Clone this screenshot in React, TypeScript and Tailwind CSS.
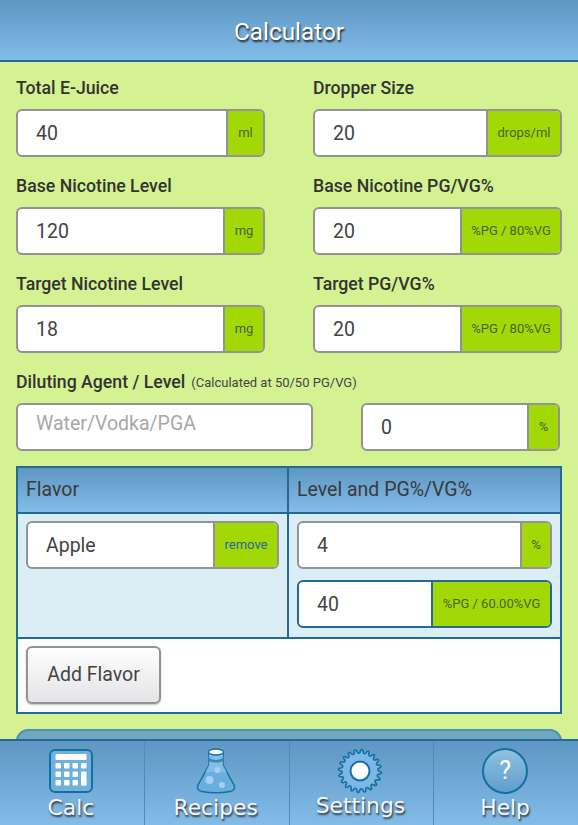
import type { ReactNode } from "react";

const font = "font-['Roboto','Liberation_Sans',sans-serif]";

function Field({
  value,
  unit,
  unitWidth,
  unitClass = "text-[#4a6420]",
  blue = false,
  className = "",
}: {
  value: string;
  unit: string;
  unitWidth: string;
  unitClass?: string;
  blue?: boolean;
  className?: string;
}) {
  const line = blue ? "border-[#22699c]" : "border-[#939393]";
  return (
    <div className={`flex h-[48px] overflow-hidden rounded-[6px] border-2 bg-white ${line} ${className}`}>
      <div className="flex min-w-0 flex-1 items-center pt-[1px] pl-[18px] text-[19.5px] text-[#444]">{value}</div>
      <div
        className={`flex shrink-0 items-center justify-center border-l-2 bg-[#a2d806] text-[13px] ${line} ${unitWidth} ${unitClass}`}
      >
        {unit}
      </div>
    </div>
  );
}

function Label({ children }: { children: ReactNode }) {
  return <div className="h-[30px] text-[17.7px] leading-[18px] font-medium text-[#333]">{children}</div>;
}

function CalcIcon() {
  const keys = [0, 1, 2, 3, 4, 5, 6, 7, 8, 9, 10];
  return (
    <svg width="44" height="44" viewBox="0 0 44 44">
      <rect x="1" y="1" width="42" height="42" rx="5" fill="#6fb0dc" stroke="#13719f" strokeWidth="2" />
      <rect x="6.500" y="5" width="31" height="6" rx="1" fill="#fff" />
      {keys.map((k) => {
        const col = k < 4 ? k : k < 7 ? k - 4 : k - 7;
        const row = k < 4 ? 0 : k < 7 ? 1 : 2;
        return <rect key={k} x={6.500 + col * 8.500} y={14 + row * 8.500} width="5.500" height="5.500" rx="1" fill="#fff" />;
      })}
      <rect x="32" y="22.500" width="5.500" height="14" rx="1" fill="#fff" />
    </svg>
  );
}

function FlaskIcon() {
  return (
    <svg width="40" height="46" viewBox="0 0 40 46">
      <path
        d="M13 4v13L2 37c-1.600 3.500 .5 6 4 6.500 8 1.500 20 1.500 28 0 3.500-.5 5.600-3 4-6.500L27 17V4z"
        fill="#6aaedd"
        stroke="#13719f"
        strokeWidth="1.500"
      />
      <path d="M13 4v13L9 25c7-2 15-2 22 0l-4-8V4z" fill="#8fc4ea" opacity="0.7" />
      <path d="M13 10c4 2.500 10 2.500 14 0v3c-4 2-10 2-14 0z" fill="#2f75a6" opacity="0.8" />
      <ellipse cx="20" cy="4" rx="7.500" ry="3" fill="#fff" stroke="#13719f" strokeWidth="1.500" />
      <circle cx="21.500" cy="22" r="3" fill="#a6d0ee" />
      <circle cx="13.500" cy="32" r="4" fill="#a6d0ee" />
      <circle cx="26" cy="37" r="3" fill="#a6d0ee" />
    </svg>
  );
}

function GearIcon() {
  const teeth = 20;
  const step = (Math.PI * 2) / teeth;
  const pt = (r: number, t: number) => `${(23 + r * Math.cos(t)).toFixed(2)} ${(23 + r * Math.sin(t)).toFixed(2)}`;
  let d = `M${pt(18.5, 0)} `;
  for (let i = 0; i < teeth; i++) {
    const a = i * step;
    d += `C${pt(22.5, a + step * 0.1)} ${pt(22.5, a + step * 0.4)} ${pt(19.5, a + step * 0.5)} `;
    d += `C${pt(17.5, a + step * 0.65)} ${pt(17.5, a + step * 0.85)} ${pt(18.5, a + step)} `;
  }
  return (
    <svg width="46" height="46" viewBox="0 0 46 46">
      <path d={`${d}Z`} fill="#7db7e8" stroke="#13719f" strokeWidth="1.600" />
      <circle cx="23" cy="23" r="9.500" fill="#fff" stroke="#13719f" strokeWidth="2" />
    </svg>
  );
}

function HelpIcon() {
  return (
    <div className="flex h-[46px] w-[46px] items-center justify-center rounded-full border-2 border-[#13719f] bg-gradient-to-b from-[#8fc0e3] to-[#5f9ecb] text-[25px] text-white">
      ?
    </div>
  );
}

function Tab({ label, icon, labelClass = "mt-[2px]" }: { label: string; icon: ReactNode; labelClass?: string }) {
  return (
    <div className="flex flex-1 flex-col items-center border-l border-[#4f8cb8] pt-[7px] pr-[2px] first:border-l-0">
      <div className="flex h-[46px] items-center">{icon}</div>
      <div
        className={`font-['DejaVu_Sans',sans-serif] text-[21.800px] leading-[24px] text-[#f4f8fb] [text-shadow:1px_2px_2px_#333] ${labelClass}`}
      >
        {label}
      </div>
    </div>
  );
}

export default function App() {
  return (
    <div className={`flex h-[825px] w-[578px] flex-col overflow-hidden bg-[#d4f291] ${font}`}>
      {/* Header */}
      <div className="flex h-[62px] shrink-0 items-center justify-center border-b-2 border-[#22699c] bg-gradient-to-b from-[#5f97c3] to-[#82bce9] pt-[4px] text-[24.300px] text-white [text-shadow:1px_2px_2px_#222]">
        Calculator
      </div>

      <div className="min-h-0 flex-1 overflow-hidden px-[16px] pt-[17px]">
        <div className="grid grid-cols-[249px_249px] gap-x-[48px] gap-y-[20px]">
          <div>
            <Label>Total E-Juice</Label>
            <Field value="40" unit="ml" unitWidth="w-[37px]" />
          </div>
          <div>
            <Label>Dropper Size</Label>
            <Field value="20" unit="drops/ml" unitWidth="w-[74px]" />
          </div>
          <div>
            <Label>Base Nicotine Level</Label>
            <Field value="120" unit="mg" unitWidth="w-[40px]" />
          </div>
          <div>
            <Label>Base Nicotine PG/VG%</Label>
            <Field value="20" unit="%PG / 80%VG" unitWidth="w-[100px]" />
          </div>
          <div>
            <Label>Target Nicotine Level</Label>
            <Field value="18" unit="mg" unitWidth="w-[40px]" />
          </div>
          <div>
            <Label>Target PG/VG%</Label>
            <Field value="20" unit="%PG / 80%VG" unitWidth="w-[100px]" />
          </div>
        </div>

        {/* Diluting agent */}
        <div className="mt-[20px]">
          <div className="flex h-[30px] items-start">
            <span className="text-[17.7px] leading-[18px] font-medium text-[#333]">Diluting Agent / Level</span>
            <span className="mt-[1px] ml-[6px] text-[13px] leading-[18px] text-[#444]">(Calculated at 50/50 PG/VG)</span>
          </div>
          <div className="flex items-start">
            <div className="h-[48px] w-[297px] rounded-[6px] border-2 border-[#939393] bg-white pt-[4px] pl-[18px] text-[19.5px] text-[#a8a8a8]">
              Water/Vodka/PGA
            </div>
            <Field value="0" unit="%" unitWidth="w-[31px]" className="ml-[48px] w-[199px]" />
          </div>
        </div>

        {/* Flavor table */}
        <div className="mt-[15px] w-[546px] border-2 border-[#22699c] bg-white">
          <div className="grid grid-cols-[269px_1fr]">
            <div className="flex h-[44px] items-center bg-gradient-to-b from-[#5f97c3] to-[#82bce9] pl-[8px] text-[19.5px] text-[#3a3a3a]">
              Flavor
            </div>
            <div className="flex h-[44px] items-center border-l-2 border-[#22699c] bg-gradient-to-b from-[#5f97c3] to-[#82bce9] pl-[8px] text-[19.5px] text-[#3a3a3a]">
              Level and PG%/VG%
            </div>
            <div className="h-[125px] border-t-2 border-[#22699c] bg-[#dbeef6] px-[8px] pt-[7px]">
              <Field value="Apple" unit="remove" unitWidth="w-[64px]" unitClass="text-[#22699c]" className="w-[253px]" />
            </div>
            <div className="flex h-[125px] flex-col gap-[11px] border-t-2 border-l-2 border-[#22699c] bg-[#dbeef6] px-[8px] pt-[7px]">
              <Field value="4" unit="%" unitWidth="w-[30px]" className="w-[255px]" />
              <Field value="40" unit="%PG / 60.00%VG" unitWidth="w-[119px]" blue className="w-[255px]" />
            </div>
          </div>
          <div className="flex h-[75px] items-start border-t-2 border-[#22699c] px-[8px] pt-[7px]">
            <div className="flex h-[58px] w-[135px] items-center justify-center rounded-[6px] border-2 border-[#939393] bg-gradient-to-b from-white to-[#e4e4e6] text-[19.5px] text-[#444] shadow-[0_1px_2px_rgba(0,0,0,0.25)]">
              Add Flavor
            </div>
          </div>
        </div>

        {/* Next panel, cut off by the tab bar */}
        <div className="mt-[15px] h-[40px] w-[546px] rounded-t-[12px] border-2 border-[#4d93ad] bg-[#70a8c2]" />
      </div>

      {/* Tab bar */}
      <div className="flex h-[86px] shrink-0 border-t-2 border-[#22699c] bg-gradient-to-b from-[#5f97c3] to-[#82bce9]">
        <Tab label="Calc" icon={<CalcIcon />} />
        <Tab label="Recipes" icon={<FlaskIcon />} />
        <Tab label="Settings" icon={<GearIcon />} labelClass="mt-0" />
        <Tab label="Help" icon={<HelpIcon />} />
      </div>
    </div>
  );
}
